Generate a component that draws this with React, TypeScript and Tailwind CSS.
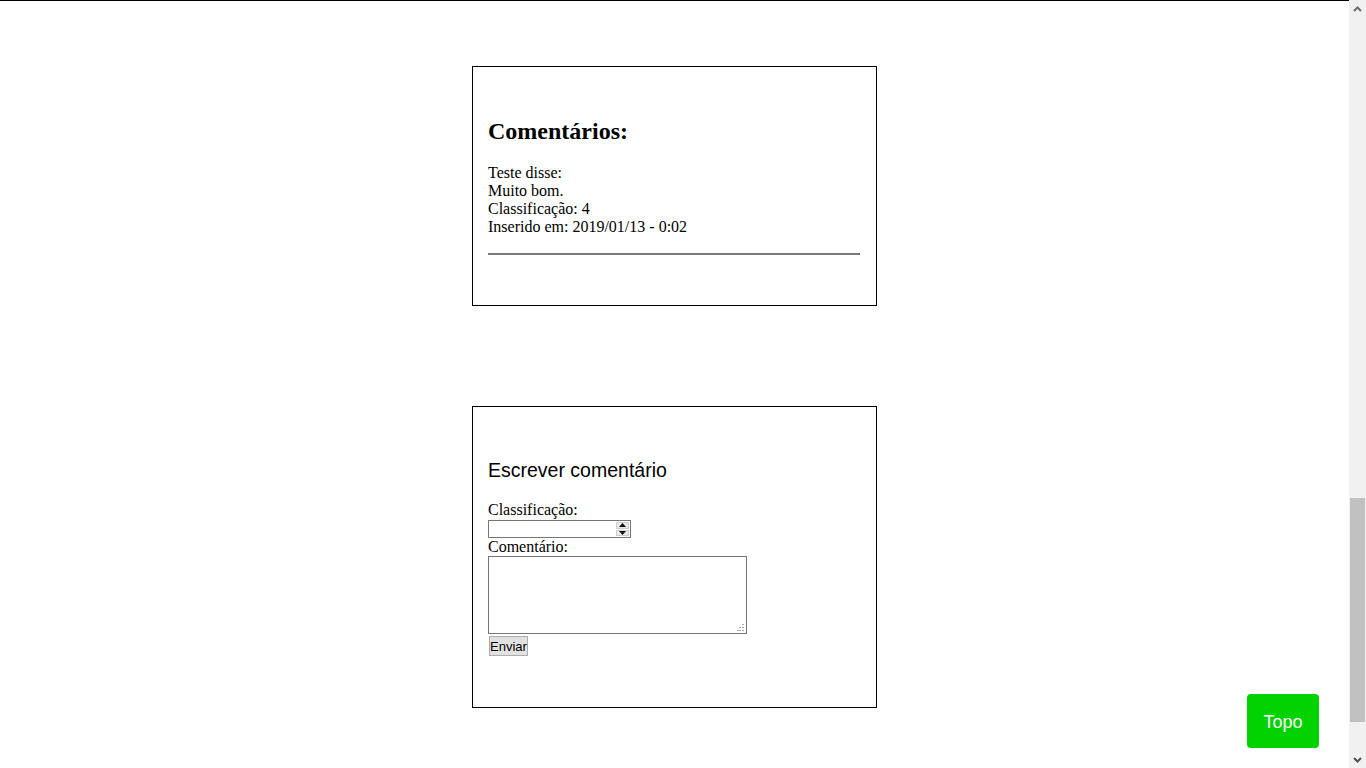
import React from "react";

function SpinButtons() {
  return (
    <div className="flex h-full w-[15px] flex-col gap-[1px] p-[1px]">
      <div className="flex flex-1 items-center justify-center border border-[#cfcfcf] bg-[#e9e9e9]">
        <svg width="7" height="4" viewBox="0 0 7 4">
          <polygon points="3.5,0 7,4 0,4" fill="#111" />
        </svg>
      </div>
      <div className="flex flex-1 items-center justify-center border border-[#cfcfcf] bg-[#e9e9e9]">
        <svg width="7" height="4" viewBox="0 0 7 4">
          <polygon points="0,0 7,0 3.5,4" fill="#111" />
        </svg>
      </div>
    </div>
  );
}

function Scrollbar() {
  return (
    <div className="flex h-full w-[17px] flex-col bg-[#f1f1f1]">
      <div className="flex h-[17px] items-center justify-center">
        <svg width="9" height="6" viewBox="0 0 9 6">
          <polyline points="1,5 4.5,1.5 8,5" fill="none" stroke="#6e6e6e" strokeWidth="2" />
        </svg>
      </div>
      <div className="h-[481px]" />
      <div className="ml-[1px] h-[224px] w-[15px] bg-[#c1c1c1]" />
      <div className="flex-1" />
      <div className="flex h-[17px] items-center justify-center">
        <svg width="9" height="6" viewBox="0 0 9 6">
          <polyline points="1,1 4.5,4.5 8,1" fill="none" stroke="#505050" strokeWidth="2" />
        </svg>
      </div>
    </div>
  );
}

export default function App() {
  return (
    <div className="flex h-screen w-full overflow-hidden bg-white font-['Liberation_Serif','Times_New_Roman',serif] text-black">
      <div className="flex min-w-0 flex-1 flex-col">
        <div className="h-px w-full bg-black" />
        <div className="flex flex-col items-center pt-[65px]">
          {/* Comments box */}
          <div className="h-[240px] w-[405px] border border-black pl-[15px] pr-[16px] pt-[50px]">
            <h2 className="text-[24px] font-bold leading-[28px]">Comentários:</h2>
            <div className="mt-[19px] text-[16px] leading-[18px]">
              <div>Teste disse:</div>
              <div>Muito bom.</div>
              <div>Classificação: 4</div>
              <div>Inserido em: 2019/01/13 - 0:02</div>
            </div>
            <div className="mt-[17px] h-[2px] w-full bg-[#7a7a7a]" />
          </div>

          {/* Write comment box */}
          <div className="mt-[100px] h-[302px] w-[405px] border border-black px-[15px] pt-[52px]">
            <h3 className="font-['Liberation_Sans',Arial,sans-serif] text-[19.5px] font-normal leading-[23px]">
              Escrever comentário
            </h3>
            <div className="mt-[19px] text-[16px] leading-[18px]">Classificação:</div>
            <div className="mt-[1px] flex h-[18px] w-[143px] justify-end border border-[#767676] bg-white">
              <SpinButtons />
            </div>
            <div className="text-[16px] leading-[18px]">Comentário:</div>
            <div className="relative h-[78px] w-[259px]">
              <textarea className="block h-full w-full resize-none border border-[#767676] bg-white outline-none" />
              <svg
                className="pointer-events-none absolute bottom-[3px] right-[3px]"
                width="7"
                height="7"
                viewBox="0 0 7 7"
              >
                <rect x="5" y="0" width="2" height="1" fill="#b0b0b0" />
                <rect x="2" y="3" width="2" height="1" fill="#b0b0b0" />
                <rect x="5" y="3" width="2" height="1" fill="#b0b0b0" />
                <rect x="0" y="6" width="2" height="1" fill="#b0b0b0" />
                <rect x="2" y="6" width="2" height="1" fill="#b0b0b0" />
                <rect x="5" y="6" width="2" height="1" fill="#b0b0b0" />
              </svg>
            </div>
            <button className="ml-[1px] mt-[2px] flex h-[20px] w-[39px] items-center justify-center border border-[#adadad] bg-[#e1e1e1] p-0 font-['Liberation_Sans',Arial,sans-serif] text-[13px] leading-none text-black">
              Enviar
            </button>
          </div>
        </div>
      </div>
      <Scrollbar />

      <button className="fixed bottom-[20px] right-[47px] h-[54px] w-[72px] rounded-[4px] bg-[#00d300] pt-[1px] font-['Liberation_Sans',Arial,sans-serif] text-[18px] leading-[22px] text-white">
        Topo
      </button>
    </div>
  );
}
